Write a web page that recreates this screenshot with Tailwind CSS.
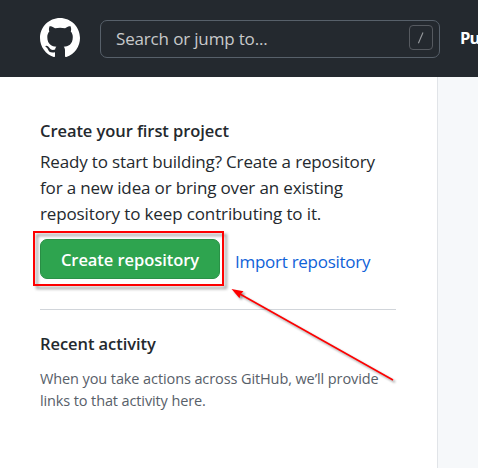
<!DOCTYPE html>
<html lang="en">
<head>
<meta charset="utf-8">
<title>GitHub</title>
<script src="https://cdn.jsdelivr.net/npm/@tailwindcss/browser@4"></script>
</head>
<body class="w-[478px] h-[468px] overflow-hidden bg-white font-['Open_Sans','Noto_Sans',sans-serif] text-[#24292e]">
<div class="relative flex h-[468px] w-[478px] flex-col overflow-hidden">
  <header class="flex h-[77px] shrink-0 items-center bg-[#24292f] pl-10 whitespace-nowrap">
    <svg class="relative -top-px size-10 shrink-0" viewBox="0 0 16 16" fill="#fff"><path fill-rule="evenodd" d="M8 0C3.58 0 0 3.58 0 8c0 3.54 2.29 6.53 5.47 7.59.4.07.55-.17.55-.38 0-.19-.01-.82-.01-1.49-2.01.37-2.53-.49-2.69-.94-.09-.23-.48-.94-.82-1.13-.28-.15-.68-.52-.01-.53.63-.01 1.08.58 1.23.82.72 1.21 1.87.87 2.33.66.07-.52.28-.87.51-1.07-1.78-.2-3.64-.89-3.64-3.95 0-.87.31-1.59.82-2.15-.08-.2-.36-1.02.08-2.12 0 0 .67-.21 2.2.82.64-.18 1.32-.27 2-.27.68 0 1.36.09 2 .27 1.53-1.04 2.2-.82 2.2-.82.44 1.1.16 1.92.08 2.12.51.56.82 1.27.82 2.15 0 3.07-1.87 3.75-3.65 3.95.29.25.54.73.54 1.48 0 1.07-.01 1.93-.01 2.2 0 .21.15.46.55.38A8.013 8.013 0 0016 8c0-4.42-3.58-8-8-8z"/></svg>
    <div class="ml-5 flex h-[38px] w-[340px] shrink-0 items-center justify-between rounded-[7px] border border-[#57606a] pr-1.5 pl-[15px]">
      <span class="text-[17px] tracking-[-0.16px] text-[#c8c9cb]">Search or jump to...</span>
      <svg class="relative -top-px h-[26px] w-6" viewBox="0 0 24 26" fill="none"><rect x=".5" y=".5" width="23" height="24" rx="3.5" stroke="#565a60"/><path d="M9.4 18.3 14 7.5" stroke="#979a9e" stroke-width="1.1"/></svg>
    </div>
    <span class="ml-5 text-[16.5px] font-bold tracking-[-0.9px] text-white">Pu</span>
  </header>
  <div class="flex grow">
    <aside class="w-[438px] shrink-0 border-r border-[#e1e4e8] pt-[41px] pl-10">
      <h2 class="h-[26px] text-[16.5px] leading-[26px] font-semibold whitespace-nowrap"><span class="tracking-[-0.07px]">Create your first project</span></h2>
      <p class="mt-[5px] flex flex-col items-start text-[17px] leading-[26px] whitespace-nowrap">
        <span class="tracking-[-0.16px]">Ready to start building? Create a repository</span>
        <span class="tracking-[-0.15px]">for a new idea or bring over an existing</span>
        <span class="tracking-[-0.13px]">repository to keep contributing to it.</span>
      </p>
      <div class="mt-3 flex h-10 items-center whitespace-nowrap">
        <button class="h-10 w-[180px] rounded-[7px] border border-[#2a9147] bg-[#2ea44f] pt-[3px] text-[16.5px] font-semibold text-white"><span class="tracking-[-0.06px]">Create repository</span></button>
        <a class="ml-[15px] pt-[5px] text-[17px] leading-[26px] tracking-[-0.27px] text-[#0f62d8]">Import repository</a>
      </div>
      <div class="mt-[30px] w-[356px] border-t border-[#d1d5da] pt-[21px]">
        <h2 class="text-[16.5px] leading-[26px] font-semibold whitespace-nowrap"><span class="tracking-[-0.07px]">Recent activity</span></h2>
        <p class="mt-[11px] flex flex-col items-start text-[14.5px] leading-[22px] whitespace-nowrap text-[#586069]">
          <span class="tracking-[-0.1px]">When you take actions across GitHub, we’ll provide</span>
          <span class="tracking-[-0.12px]">links to that activity here.</span>
        </p>
      </div>
    </aside>
    <main class="grow bg-[#f6f8fa]"></main>
  </div>
  <div class="absolute top-[231px] left-[33px] h-[55px] w-[191px] border-2 border-[#fe0000] drop-shadow-[3px_3px_1.5px_rgba(0,0,0,0.4)]"></div>
  <svg class="absolute top-0 left-0 drop-shadow-[2px_2px_1px_rgba(0,0,0,0.4)]" width="478" height="468" viewBox="0 0 478 468"><path d="M239 293.5 393 380" stroke="#fe0000" stroke-width="1.6" fill="none"/><path d="M231.500 289 243.500 291.200 240.500 294.500 239.500 298.200Z" fill="#fe0000"/></svg>
</div>
</body>
</html>
